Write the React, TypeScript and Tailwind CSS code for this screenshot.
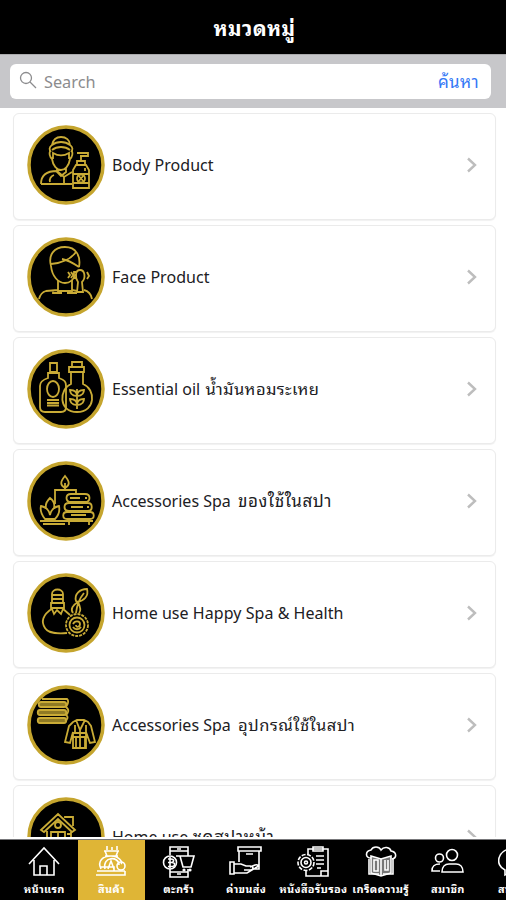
import type { ReactNode } from "react";

type Category = { name: string; thai?: string; thaiClass?: string; icon: ReactNode };
type Tab = { label: string; icon: ReactNode; active?: boolean };

const categories: Category[] = [
  {
    name: "Body Product",
    icon: (
      <>
        <path d="M24 27c-2-2-2-5 1-7 1-5 4-8 9-8s9 3 9 8c3 2 3 5 1 7M25 20c5-4 13-4 18 0M25 25c5-4 13-4 18 0M23 26c-1 3 0 6 2 8 1 7 5 11 9 11s8-4 9-11c2-2 3-5 2-8M26 34v-6c5 3 11 3 16 0v6M30 43v4l4 4 5-4v-4" />
        <path d="M14 59c0-8 4-13 16-13l7 6 8-5M14 59h31M23 57c-1-3 1-6 4-7M37 52v7" />
        <path d="M50 28h11v3h-8M54 31v5M50 36h8v4h-8zM49 40h10l3 5v18H46V45zM46 49h16M46 58h16M51 50l6 7M51 57l6-7M58 43v3" />
        <circle cx="54" cy="53.500" r="4" />
      </>
    ),
  },
  {
    name: "Face Product",
    icon: (
      <>
        <path d="M24 29c-3-11 3-19 14-19s16 9 14 20M24 29c1 10 7 17 14 17 5 0 9-4 11-9M24 27c12-1 20-5 25-12M35 22c6 1 11 4 17 8" />
        <path d="M31 43v11h14V43M12 62c1-4 3-7 7-8l12-1M45 53l5 1M57 53c5 1 7 4 8 9M26 53v3h9M40 56h10" />
        <path d="M53 33c-5 0-5 8-2 12l-1 10h6l-1-10c4-4 3-12-2-12zM41 35l2 3-2 3M44 35l2 3-2 3M49 35h-2v6h2M60 35l2 4-2 3" />
      </>
    ),
  },
  {
    name: "Essential oil ",
    thai: "น้ำมันหอมระเหย",
    thaiClass: "ml-[1px] text-[16.500px] tracking-[0.400px]",
    icon: (
      <>
        <path d="M23 14h7v9h-7zM21 24h11v5c6 2 7 4 7 8v21c0 3-2 5-5 5H18c-3 0-5-2-5-5V37c0-4 2-6 8-8zM20 51h12M20 54h12M20 56.500h12" />
        <ellipse cx="26" cy="40" rx="6" ry="8" />
        <path d="M45 13h10v5H45zM42 18h15v5H42zM44 23v12c-12 5-13 28 6 28s19-23 6-28V23M50 60V40M50 47c-6 0-7-4-7-6 5 0 7 2 7 6zM50 47c6 0 7-4 7-6-5 0-7 2-7 6zM50 56c-6 0-7-4-7-6 5 0 7 2 7 6zM50 56c6 0 7-4 7-6-5 0-7 2-7 6z" />
      </>
    ),
  },
  {
    name: "Accessories Spa ",
    thai: "ของใช้ในสปา",
    thaiClass: "ml-[3px] text-[17px] tracking-[0.550px]",
    icon: (
      <>
        <path d="M38 27c-5-3-5-6 0-12 5 6 5 9 0 12zM38 22v7M28 43V29h21v5" />
        <path d="M18 58c-4-5-5-9-4-13 5 1 8 4 9 9 1-5 4-8 9-9 1 5 0 9-4 13zM19 47c-1-4 1-7 4-10 4 3 5 6 4 10M13 60h27M16 63h22" />
        <path d="M44 33h14c6 0 6 8 0 8H44c-6 0-6-8 0-8zM42 42h19c5 0 5 8 0 8H42c-6 0-6-8 0-8zM40 51h23c5 0 5 7 0 7H40c-5 0-5-7 0-7M43 37h10M44 46h12M44 54h15M37 60h29M42 60v4M62 60v4M58 37h2M60 46h2" />
      </>
    ),
  },
  {
    name: "Home use Happy Spa & Health",
    icon: (
      <>
        <path d="M25 30v-9c0-6 11-6 11 0v9M25 22h11M25 26h11M24 30h13v5H24zM26 35c-11 7-12 14-8 20 3 5 13 6 22 5M35 35l8 7M25 36l2 5 3-4 4 4 2-5" />
        <circle cx="50" cy="52" r="11" strokeDasharray="3 1" />
        <circle cx="50" cy="52" r="7.500" />
        <path d="M46 51c2-4 7-3 7 0s-4 4-4 1M46 54c2 3 6 3 8 0" />
        <path d="M46 40c-3-4 0-8 5-11 3 6 3 9 1 11M49 28c-2-7 4-12 11-12 2 7-3 12-10 13zM49 40c1-9 3-14 8-20" />
      </>
    ),
  },
  {
    name: "Accessories Spa ",
    thai: "อุปกรณ์ใช้ในสปา",
    thaiClass: "ml-[3px] text-[16.500px] tracking-[0.500px]",
    icon: (
      <>
        <path fill="#8f7a24" d="M14 17h23c3 0 3 5 0 5H14c-3 0-3-5 0-5zM13 25h24c3 0 3 5 0 5H13c-3 0-3-5 0-5zM13 33h24c3 0 3 5 0 5H13c-3 0-3-5 0-5z" />
        <path d="M15 14h25c3 3 0 6-1 8 4 3 2 6 0 8 3 2 1 5-1 6" />
        <path d="M46 37l4-2h7l4 2 3 4 4 16-5 1-4-11v16H46V47l-3 11-5-1 4-16zM49 35l4 10 5-10M53 45v18M46 48h14M45 52h16M49 52v10M58 52v10M48 40v7M59 40v7" />
      </>
    ),
  },
  {
    name: "Home use ",
    thai: "ชุดสปาหน้า",
    thaiClass: "text-[17px] tracking-[0.600px]",
    icon: (
      <>
        <path d="M14 33l17-16 17 16-3 2-14-13-14 13zM20 34v21h24V34M38 21v-1h8v9M24 35h14v18H24zM31 35v17M40 37h4" />
        <circle cx="31" cy="28" r="3" />
      </>
    ),
  },
];

const tabs: Tab[] = [
  {
    label: "หน้าแรก",
    icon: <path d="M2 19L17 3l15 16M7 15v15h20V15M13 30V21h7v9" />,
  },
  {
    label: "สินค้า",
    active: true,
    icon: (
      <>
        <path d="M13 1v4M18 2v3M23 1v4M10 6h15M11 6l2 5M24 6l-2 5M11 11h13M7 24c-4-8 2-13 10-13s12 6 10 8M11 24c-3-13 14-13 14-4M14 24l3-8 3 8M3 26h28M2 30h29v-4M6 22h14v4" />
        <circle cx="27" cy="21" r="4" />
      </>
    ),
  },
  {
    label: "ตะกร้า",
    icon: (
      <>
        <path d="M8 10V2h18v9M8 24v8h18v-8M8 6h18M8 27h18M15 4h4M15 29h4M14 11h4l3 11h8l3-11H18M8 12v11M6 14h3c4 0 3 3.500 0 3.500H6h4c4 0 3 4 0 4H6" />
        <circle cx="8" cy="17.500" r="6.500" />
        <circle cx="22" cy="25" r="0.800" />
        <circle cx="28" cy="25" r="0.800" />
      </>
    ),
  },
  {
    label: "ค่าขนส่ง",
    icon: <path d="M10 17V6M30 6v18h-5M9 2h23v4H9zM17 9h7M1 17h4v12H1zM5 19h7l5 2h4c4 0 4 4 0 4h-6M21 22l5-2c3-1 4 1 2 2l-10 6H5" />,
  },
  {
    label: "หนังสือรับรอง",
    icon: (
      <>
        <path d="M12 9V4h20v27H10v-5M17 6V2h10v4zM20 11h8M20 15h8M20 19h8M21 23h4M25 31v-5h7" />
        <circle cx="10" cy="17.500" r="8" strokeDasharray="4 1.500" />
        <circle cx="10" cy="17.500" r="5" />
        <circle cx="10" cy="17.500" r="1.500" />
      </>
    ),
  },
  {
    label: "เกร็ดความรู้",
    icon: (
      <>
        <path d="M7 13c-6 0-6-7 0-8 2-4 8-4 10 0 3-4 9-3 10 1 6 1 6 7 1 8" />
        <path d="M7 11l10 3 10-3v17l-10 3-10-3z" fill="#777" />
        <path d="M17 14v17M10 15h4v11h-4zM21 15v10h3V15M5 14v15h10M29 14v15H19" />
      </>
    ),
  },
  {
    label: "สมาชิก",
    icon: (
      <>
        <circle cx="21" cy="10" r="5.500" />
        <circle cx="8.500" cy="13" r="4" />
        <path d="M11 27c0-5 3-8 7-8h7c4 0 7 3 7 8zM9 26H1c0-5 2-7 8-7" />
      </>
    ),
  },
  {
    label: "สนทนา",
    icon: <path d="M7 25C-4 20 0 4 14 4c15 0 18 18 2 21l-9 5zM10 12h10M10 17h8" />,
  },
];

function CategoryCard({ name, thai, thaiClass, icon }: Category) {
  return (
    <div className="flex h-[106.500px] shrink-0 items-start rounded-md border border-[#ebebeb] bg-white pl-[13px] pt-[11px] shadow-[0_1px_1px_rgba(0,0,0,0.06)]">
      <svg viewBox="0 0 78 80" className="h-20 w-[78px] shrink-0" fill="none" stroke="#c9ab36" strokeWidth="1.800">
        <ellipse cx="39" cy="40" rx="37" ry="38" fill="#000" stroke="#c5a52e" strokeWidth="3.500" />
        {icon}
      </svg>
      <div className="ml-[7px] flex h-20 flex-1 items-center whitespace-pre text-[16px] text-[#202023]">
        <span className={thai ? "" : "tracking-[0.050px]"}>{name}</span>
        <span className={thaiClass}>{thai}</span>
      </div>
      <svg viewBox="0 0 12 16" className="mr-[17px] mt-8 h-4 w-3" fill="none" stroke="#bdbdbd" strokeWidth="2.400">
        <path d="M2 1.500l7 6.500-7 6.500" />
      </svg>
    </div>
  );
}

function TabItem({ label, icon, active }: Tab) {
  return (
    <div className={`flex w-[67.300px] shrink-0 flex-col items-center pt-[5px] text-white ${active ? "bg-[#dfb536]" : ""}`}>
      <svg viewBox="0 0 34 33" className="h-[33px] w-[34px] shrink-0" fill="none" stroke="currentColor" strokeWidth="1.600">
        {icon}
      </svg>
      <span className="mt-[3px] whitespace-nowrap text-[11px] font-bold leading-[16px] tracking-[0.250px]">{label}</span>
    </div>
  );
}

export default function App() {
  return (
    <div className="flex h-[900px] w-[506px] flex-col overflow-hidden bg-white font-['Noto_Sans','Noto_Sans_Thai_Looped',Loma,sans-serif]">
      <header className="flex h-[54px] shrink-0 items-center justify-center bg-black pl-[3px] pt-[3px] text-[20.500px] font-bold tracking-[0.500px] text-white">
        หมวดหมู่
      </header>

      <div className="h-[54px] shrink-0 border-t border-[#aaaaac] bg-[#c7c7ca] pl-2.5 pr-[15px] pt-[9px]">
        <div className="flex h-[35px] items-center rounded-md bg-white pl-[9px] pr-3">
          <svg viewBox="0 0 18 18" className="mb-[3px] h-[18px] w-[18px]" fill="none" stroke="#8c8c8e" strokeWidth="1.300">
            <circle cx="7" cy="7" r="5.500" />
            <path d="M11 11l6 6" />
          </svg>
          <span className="ml-[7px] flex-1 pt-0.5 text-[16.300px] text-[#8c8c8e]">Search</span>
          <span className="text-[17px] tracking-[0.300px] text-[#3478f6]">ค้นหา</span>
        </div>
      </div>

      <main className="flex min-h-0 flex-1 flex-col gap-[5.500px] overflow-hidden pl-[13px] pr-2.5 pt-[5px]">
        {categories.map((category, i) => (
          <CategoryCard key={i} {...category} />
        ))}
      </main>

      <nav className="mt-0.5 flex h-[61px] shrink-0 overflow-hidden border-t border-[#77777a] bg-black pl-[10.500px]">
        {tabs.map((tab) => (
          <TabItem key={tab.label} {...tab} />
        ))}
      </nav>
    </div>
  );
}
